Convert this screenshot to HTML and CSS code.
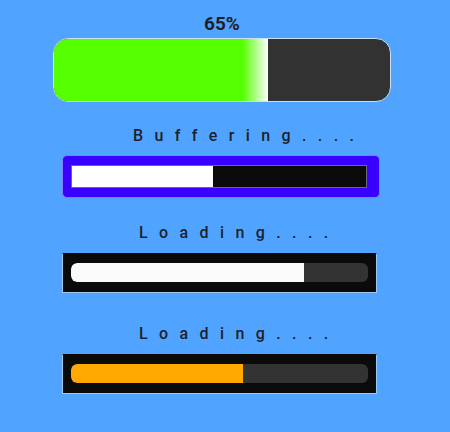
FILE: index.html
```html
<!DOCTYPE html>
<html lang="en">
<head>
    <meta charset="UTF-8">
    <meta name="viewport" content="width=device-width, initial-scale=1.0">
    <title>Progress Bars</title>
    <link rel="stylesheet" href="styles.css">
</head>
<body>

    <div class="page">
        <!-- barre principale avec pourcentage -->
        <div class="percent">65%</div>
        <div class="bar-main">
            <div class="bar-main-fill"></div>
        </div>

        <div class="label label-buffer">Buffering....</div>
        <div class="bar-buffer">
            <div class="bar-buffer-track">
                <div class="bar-buffer-fill"></div>
            </div>
        </div>

        <div class="label label-load">Loading....</div>
        <div class="bar-load">
            <div class="bar-load-track">
                <div class="bar-load-fill white" style="width: 78.6%"></div>
            </div>
        </div>

        <div class="label label-load2">Loading....</div>
        <div class="bar-load">
            <div class="bar-load-track">
                <div class="bar-load-fill orange" style="width: 58%"></div>
            </div>
        </div>
    </div>

</body>
</html>
```

FILE: styles.css
```css
body {
    margin: 0;
    padding: 0;
    background-color: #50a4ff;
    font-family: Roboto, "Noto Sans", sans-serif;
    color: #1c1f2a;
}

.page {
    display: flex;
    flex-direction: column;
    align-items: flex-start;
    padding-top: 14px;
    width: 450px;
    height: 432px;
    box-sizing: border-box;
}

.percent {
    font-size: 19px;
    font-weight: bold;
    line-height: 19px;
    margin-left: 204px;
    color: #1e1f26;
}

.bar-main {
    margin-top: 5px;
    margin-left: 53px;
    width: 338px;
    height: 64px;
    box-sizing: border-box;
    border: 1px solid #c9e0f5;
    border-radius: 15px;
    background-color: #323232;
    overflow: hidden;
}

.bar-main-fill {
    width: 214px;
    height: 100%;
    background: linear-gradient(to right, #55ff00 0%, #55ff00 88%, #ffffff 100%);
}

.label {
    font-size: 16px;
    font-weight: 500;
    line-height: 16px;
    letter-spacing: 11.4px;
    white-space: nowrap;
}

.label-buffer {
    margin-top: 26px;
    margin-left: 133px;
}

.label-load {
    margin-top: 27px;
    margin-left: 139px;
}

.label-load2 {
    margin-top: 33px;
    margin-left: 139px;
}

.bar-buffer {
    margin-top: 11px;
    margin-left: 62px;
    width: 318px;
    height: 43px;
    box-sizing: border-box;
    padding: 9px 12px 9px 8px;
    background-color: #3a00ff;
    border-radius: 5px;
    border: 1px solid #7a80ff;
}

.bar-buffer-track {
    height: 100%;
    box-sizing: border-box;
    background-color: #0a0a0a;
    border: 1px solid #6a6a7a;
}

.bar-buffer-fill {
    width: 48%;
    height: 100%;
    background-color: #fff;
}

.bar-load {
    margin-top: 12px;
    margin-left: 62px;
    width: 315px;
    height: 40px;
    box-sizing: border-box;
    padding: 9px 8px 10px 8px;
    background-color: #0a0a0a;
    border: 1px solid #9cc8f5;
    border-top-color: #0a0a0a;
}

.bar-load-track {
    height: 100%;
    background-color: #333;
    border-radius: 6px;
    overflow: hidden;
}

.bar-load-fill {
    height: 100%;
    border-radius: 6px 0 0 6px;
}

.bar-load-fill.white {
    background-color: #fafafa;
}

.bar-load-fill.orange {
    background-color: #ffa800;
}
```
